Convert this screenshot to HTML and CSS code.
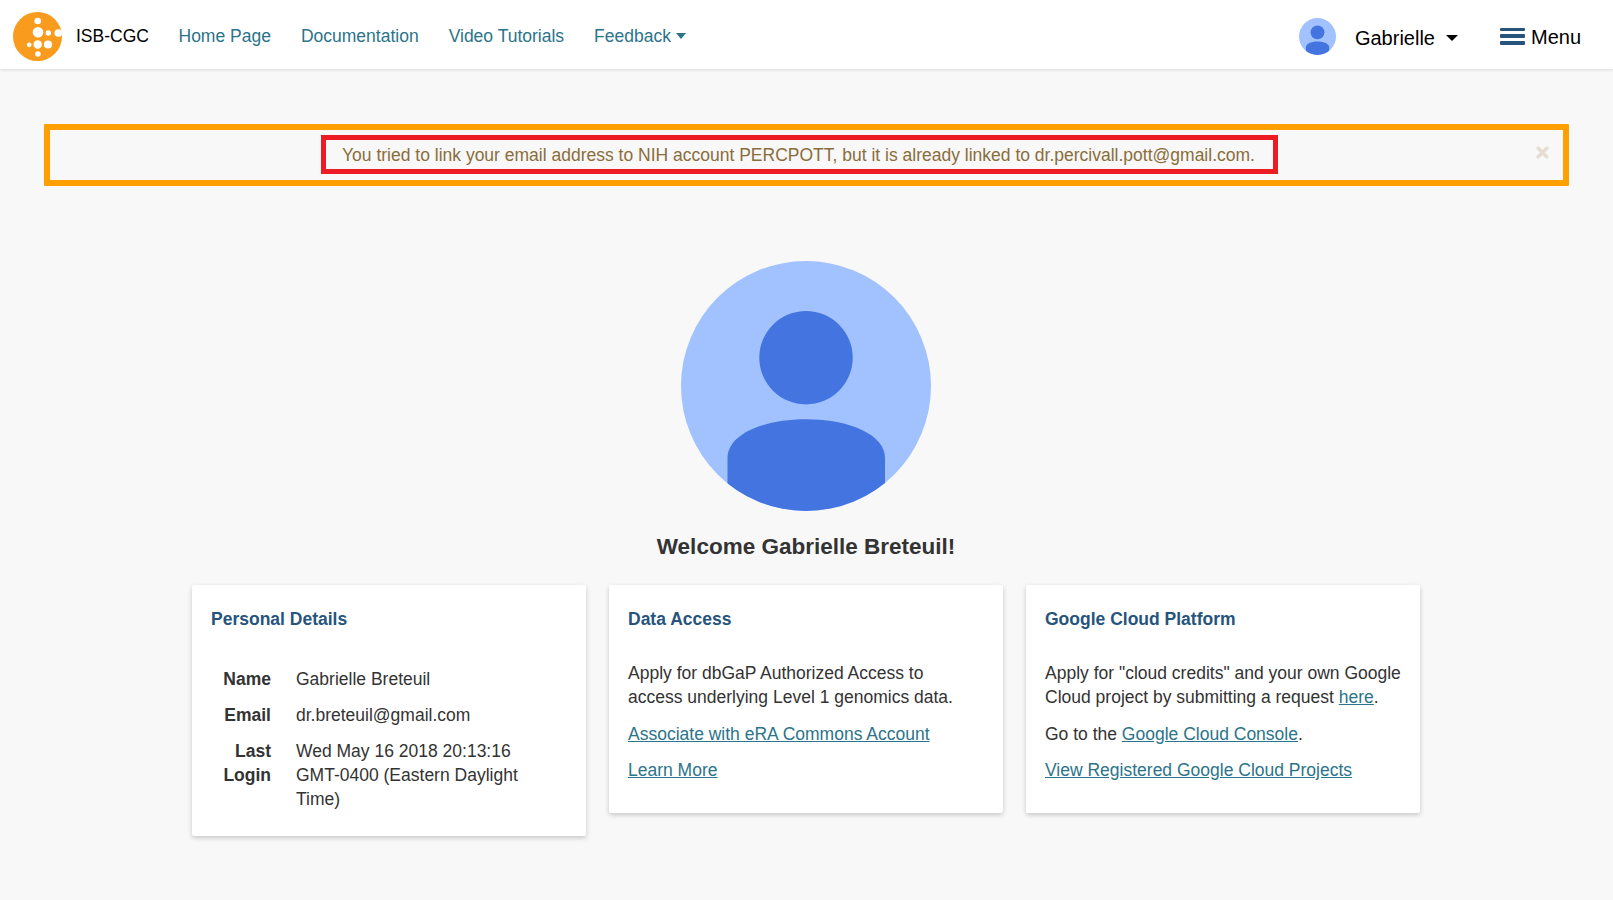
FILE: index.html
```html
<!DOCTYPE html>
<html lang="en">
<head>
<meta charset="utf-8">
<title>ISB-CGC</title>
<link rel="stylesheet" href="styles.css">
</head>
<body>
<svg width="0" height="0" class="defs">
  <defs>
    <clipPath id="round"><circle cx="125" cy="125" r="125"/></clipPath>
    <symbol id="person" viewBox="0 0 250 250">
      <g clip-path="url(#round)">
        <rect width="250" height="250" fill="#a1c2ff"/>
        <circle cx="125" cy="96.700" r="46.700" fill="#4374e0"/>
        <path d="M46.500 250V197C46.500 174 81 158.300 125 158.300S204 174 204 197V250Z" fill="#4374e0"/>
      </g>
    </symbol>
  </defs>
</svg>
<header class="header">
  <svg class="logo" viewBox="0 0 49 49">
    <circle cx="24.500" cy="24.500" r="24.500" fill="#f99b1c"/>
    <g fill="#fff">
      <circle cx="24.700" cy="9" r="3.300"/>
      <circle cx="25" cy="20.200" r="5.300"/>
      <circle cx="35.300" cy="21" r="2.700"/>
      <circle cx="45.300" cy="21" r="3.800"/>
      <circle cx="16.200" cy="32.800" r="2.400"/>
      <circle cx="24.700" cy="32.500" r="4.200"/>
      <circle cx="35" cy="32.500" r="4.100"/>
      <circle cx="24.900" cy="42" r="2.800"/>
    </g>
  </svg>
  <span class="brand">ISB-CGC</span>
  <nav class="nav">
    <a>Home Page</a>
    <a>Documentation</a>
    <a>Video Tutorials</a>
    <a>Feedback<i class="caret"></i></a>
  </nav>
  <div class="account">
    <svg class="avatar-small"><use href="#person"/></svg>
    <span class="user">Gabrielle</span><i class="caret caret-user"></i>
    <span class="bars"><i></i><i></i><i></i></span>
    <span class="menu">Menu</span>
  </div>
</header>
<main>
  <div class="alert">
    <div class="message">You tried to link your email address to NIH account PERCPOTT, but it is already linked to dr.percivall.pott@gmail.com.</div>
    <svg class="close" viewBox="0 0 13 13"><path d="M2.200 2.200L10.800 10.800M10.800 2.200L2.200 10.800" stroke="#e4ddd2" stroke-width="3.500" stroke-linecap="round"/></svg>
  </div>
  <svg class="avatar"><use href="#person"/></svg>
  <h1>Welcome Gabrielle Breteuil!</h1>
  <div class="cards">
    <section class="card">
      <h2>Personal Details</h2>
      <dl>
        <dt>Name</dt><dd>Gabrielle Breteuil</dd>
        <dt>Email</dt><dd>dr.breteuil@gmail.com</dd>
        <dt>Last<br>Login</dt><dd>Wed May 16 2018 20:13:16<br>GMT-0400 (Eastern Daylight<br>Time)</dd>
      </dl>
    </section>
    <section class="card">
      <h2>Data Access</h2>
      <p>Apply for dbGaP Authorized Access to<br>access underlying Level 1 genomics data.</p>
      <p><a>Associate with eRA Commons Account</a></p>
      <p><a>Learn More</a></p>
    </section>
    <section class="card">
      <h2>Google Cloud Platform</h2>
      <p>Apply for "cloud credits" and your own Google<br>Cloud project by submitting a request <a>here</a>.</p>
      <p>Go to the <a>Google Cloud Console</a>.</p>
      <p><a>View Registered Google Cloud Projects</a></p>
    </section>
  </div>
</main>
</body>
</html>
```
FILE: styles.css
```css
* { box-sizing: border-box; }
body {
  margin: 0;
  min-height: 900px;
  background: #f8f8f8;
  color: #333;
  font: 17.5px/24.28px "Liberation Sans", Arial, sans-serif;
  white-space: nowrap;
}
.defs { position: absolute; }
.header {
  display: flex;
  align-items: flex-start;
  height: 69px;
  padding-left: 13px;
  background: #fff;
  box-shadow: 0 1px 3px rgba(0, 0, 0, .12);
}
.logo { width: 49px; height: 49px; margin-top: 12px; }
.brand { margin: 24px 0 0 14px; width: 73px; color: #000; }
.nav { display: flex; gap: 30px; margin: 24px 0 0 29.5px; color: #2b7489; }
.caret {
  display: inline-block;
  margin-left: 5px;
  vertical-align: 3px;
  border: 5.5px solid transparent;
  border-top: 6px solid currentColor;
  border-bottom: 0;
}
.account { display: flex; margin-left: auto; margin-right: 32px; color: #000; font-size: 20px; }
.avatar-small { width: 37px; height: 37px; margin-top: 18px; }
.user { margin: 26px 0 0 19px; }
.caret-user { margin: 35px 1px 0 11px; height: 6px; border-width: 6px 6px 0; }
.bars { display: flex; flex-direction: column; gap: 3px; width: 25px; margin: 28px 6px 0 41px; }
.bars i { height: 4px; background: #26547c; border-radius: 1px; }
.bars i:first-child { height: 3px; }
.menu { margin-top: 25px; }
main { display: flex; flex-direction: column; align-items: center; padding-top: 55px; }
.alert {
  position: relative;
  width: 1525px;
  height: 62px;
  padding: 5px 0 0 271px;
  border: 6px solid #ffa000;
  border-radius: 1px;
}
.message {
  width: 957px;
  height: 39px;
  padding: 3px 0 0 16px;
  border: 5px solid #ed1c24;
  color: #8a6d3b;
}
.close { position: absolute; top: 16px; right: 14.5px; width: 13px; height: 13px; }
.avatar { width: 250px; height: 250px; margin: 75px 1px 0 0; }
h1 { margin: 22px 1px 0 0; font-size: 22.5px; line-height: 28px; }
.cards {
  display: grid;
  grid-template-columns: repeat(3, 394px);
  gap: 23px;
  align-items: start;
  margin: 24px 1px 0 0;
}
.card {
  padding: 22px 19px 19px;
  background: #fff;
  border-radius: 2px;
  box-shadow: 0 2px 5px rgba(0, 0, 0, .2);
}
h2 { margin: 0 0 30px; font-size: 17.5px; line-height: 24px; color: #26547c; }
p { margin: 0 0 12px; }
.card a { color: #2b7489; text-decoration: underline; }
dl { display: grid; grid-template-columns: 60px 1fr; column-gap: 25px; row-gap: 12px; margin: 0; padding: 6px 0; line-height: 24px; }
dt { font-weight: bold; text-align: right; }
dd { margin: 0; }
```
